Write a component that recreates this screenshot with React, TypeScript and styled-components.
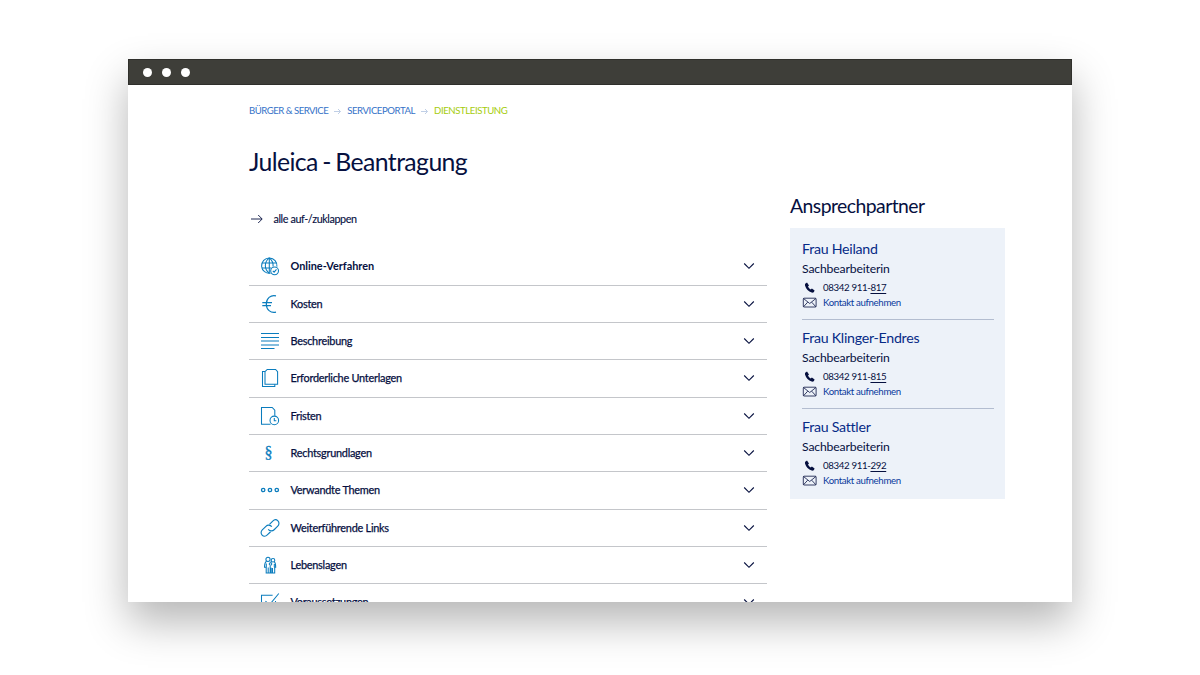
import React from "react";
import styled, { createGlobalStyle } from "styled-components";

const GlobalStyle = createGlobalStyle`
  * { box-sizing: border-box; }
  body { margin: 0; background: #fff; }
`;

const navy = "#06103f";
const iconBlue = "#0a7cbd";

const Stage = styled.div`
  height: 675px;
  padding: 59px 128.5px 0 128px;
  overflow: hidden;
  font-family: Lato, "Noto Sans", sans-serif;
  color: ${navy};
`;

const Browser = styled.div`
  height: 543px;
  background: #fff;
  box-shadow: 0 20px 40px rgba(0, 0, 0, 0.29);
  display: flex;
  flex-direction: column;
  overflow: hidden;
`;

const TitleBar = styled.div`
  flex: none;
  height: 26px;
  padding: 0 13.5px;
  display: flex;
  align-items: center;
  gap: 10px;
  background: #3e3e39;
  border: 1px solid #2f2f2b;
`;

const Dot = styled.span`
  width: 9px;
  height: 9px;
  border-radius: 50%;
  background: #fff;
`;

const Page = styled.div`
  flex: 1;
  min-height: 0;
  padding: 0 66px 0 121px;
  display: grid;
  grid-template-columns: 518px 215px;
  column-gap: 23px;
  overflow: hidden;
`;

const Main = styled.main`
  display: flex;
  flex-direction: column;
`;

const Breadcrumb = styled.nav`
  margin-top: 19px;
  height: 14px;
  display: flex;
  align-items: center;
  font-size: 9.6px;
  line-height: 14px;
  letter-spacing: -0.42px;
`;

const Crumb = styled.span<{ $current?: boolean }>`
  color: ${(p) => (p.$current ? "#a5cc0c" : "#3572c8")};
  white-space: nowrap;
  &:first-child {
    letter-spacing: -0.5px;
  }
`;

const CrumbArrow = styled.svg`
  flex: none;
  width: 7px;
  height: 7px;
  margin: 0 6px;
  stroke: #c0cfe6;
`;

const Title = styled.h1`
  margin: 28px 0 0;
  height: 32px;
  font-size: 24.8px;
  line-height: 32px;
  font-weight: 400;
  letter-spacing: -0.6px;
  word-spacing: -1.3px;
`;

const ToggleAll = styled.div`
  margin-top: 33px;
  height: 16px;
  padding-left: 2px;
  display: flex;
  align-items: center;
  gap: 10.5px;
  font-size: 10.8px;
  line-height: 16px;
  letter-spacing: -0.4px;
  -webkit-text-stroke: 0.12px ${navy};
`;

const List = styled.div`
  margin-top: 21.5px;
  flex: none;
`;

const Row = styled.div`
  height: 37.3px;
  padding: 0 12px 0.4px 11px;
  display: flex;
  align-items: center;
  border-bottom: 1px solid #c4c6ca;
  font-size: 10.9px;
  line-height: 16px;
`;

const RowIcon = styled.svg`
  flex: none;
  width: 20px;
  height: 20px;
  margin-right: 10.5px;
  fill: none;
  stroke: ${iconBlue};
  stroke-width: 1.05;
`;

const RowLabel = styled.span<{ $strong?: boolean }>`
  flex: 1;
  font-weight: ${(p) => (p.$strong ? 700 : 400)};
  letter-spacing: ${(p) => (p.$strong ? -0.02 : -0.25)}px;
  -webkit-text-stroke: ${(p) => (p.$strong ? 0 : 0.25)}px ${navy};
`;

const Chevron = styled.svg`
  flex: none;
  width: 12px;
  height: 8px;
  fill: none;
  stroke: ${navy};
  stroke-width: 1.1;
`;

const Side = styled.aside`
  padding-top: 106.5px;
`;

const SideTitle = styled.h2`
  margin: 0;
  height: 28px;
  font-size: 19.4px;
  line-height: 27px;
  font-weight: 400;
  letter-spacing: -0.55px;
`;

const Contacts = styled.div`
  margin-top: 8.5px;
  height: 271px;
  padding: 2px 11.5px 0 12px;
  background: #edf2f9;
`;

const Contact = styled.section`
  height: 89px;
  padding-top: 8px;
  border-top: 1px solid transparent;
  & + & {
    border-top-color: #b3bdd0;
  }
`;

const Name = styled.div`
  height: 20px;
  font-size: 14.2px;
  line-height: 20px;
  letter-spacing: -0.27px;
  color: #062a86;
`;

const Role = styled.div`
  height: 20.5px;
  font-size: 12.2px;
  line-height: 20px;
  letter-spacing: -0.15px;
`;

const Detail = styled.div<{ $link?: boolean }>`
  height: 15px;
  display: flex;
  align-items: center;
  gap: 6px;
  font-size: 9.7px;
  line-height: 15px;
  letter-spacing: ${(p) => (p.$link ? -0.37 : -0.36)}px;
  color: ${(p) => (p.$link ? "#0a3a9c" : navy)};
`;

const DetailIcon = styled.svg`
  flex: none;
  width: 15px;
  height: 13px;
`;

const Extension = styled.span`
  text-decoration: underline;
  text-underline-offset: 1.5px;
  text-decoration-thickness: 1px;
`;

const glyphs: Record<string, React.ReactNode> = {
  globe: (
    <>
      <path d="M10.6 17.2A7.7 7.7 0 1 1 16.9 10.6" />
      <path d="M9.3 1.8v15.5M2 7h14.2M1.8 12h9.5M9.3 1.8C4 5.8 4 13.4 9.3 17.3M9.3 1.8c3 2.4 4 5.5 3.8 8.7" />
      <circle cx="14.6" cy="14.8" r="3.9" />
      <path d="m12.8 14.9 1.3 1.3 2.4-2.8" />
    </>
  ),
  euro: <path strokeWidth="1.2" d="M16 1.8C10.5.5 6.3 4.5 6.3 10s4.2 9.5 9.7 8.200M2.3 8.6h9.7M2.3 11.6h8.7" />,
  lines: <path strokeWidth="1.2" d="M1 2.5h18M1 6.5h18M1 10h18M1 14h18M1 17.5h13.5" />,
  copy: (
    <>
      <path d="M7.2 1.5h8.4l2 2.2v12.6H5V3.7Z" />
      <path d="M5 3.5H2.5v15h12.3v-2.2" />
    </>
  ),
  deadline: (
    <>
      <path d="M10.5 18.3H1.5V1.5h10.7l2.600 2.700v5.500" />
      <circle cx="14.300" cy="14.400" r="4.300" />
      <path d="M14.300 12v2.700h2" />
    </>
  ),
  dots: (
    <g strokeWidth="1.3">
      <circle cx="3.200" cy="10" r="1.700" />
      <circle cx="10" cy="10" r="1.700" />
      <circle cx="16.800" cy="10" r="1.700" />
    </g>
  ),
  link: (
    <g transform="translate(-0.900 -0.900) scale(0.910)" strokeWidth="1.250">
      <path d="M10 13.400c1.900 2.200 4.700 2.300 6.500.5l4-4c1.700-1.700 1.700-4.200.2-5.700s-4-1.500-5.700.2l-3.600 3.500" />
      <path d="M14 10.600c-1.900-2.200-4.700-2.300-6.500-.5l-4 4c-1.700 1.700-1.700 4.200-.2 5.700s4 1.500 5.700-.2l3.600-3.500" />
    </g>
  ),
  family: (
    <>
      <circle cx="8" cy="4.300" r="2.100" />
      <circle cx="13" cy="5.200" r="1.800" />
      <circle cx="10.500" cy="9" r="1.300" />
      <path d="M6.600 6.200C5 7 4.500 8 4.500 12.300h1.700V18h2v-5.500M8.200 18h2v-7M10.200 7h1.600M14.300 6.700c1.100 1 1.400 3 1.400 5.600h-1V18h-2.200v-5M12.500 18h-1.300v-5.300M6.300 8.500v4M14.300 9v3.300" />
    </>
  ),
  check: <path d="M12.600 3.300H1.500v15h14V9M18.800 1.500 9.500 12.800 5.500 9.200" />,
};

const rows: { label: string; icon: string; strong?: boolean }[] = [
  { label: "Online-Verfahren", icon: "globe", strong: true },
  { label: "Kosten", icon: "euro" },
  { label: "Beschreibung", icon: "lines" },
  { label: "Erforderliche Unterlagen", icon: "copy" },
  { label: "Fristen", icon: "deadline" },
  { label: "Rechtsgrundlagen", icon: "section" },
  { label: "Verwandte Themen", icon: "dots" },
  { label: "Weiterführende Links", icon: "link" },
  { label: "Lebenslagen", icon: "family" },
  { label: "Voraussetzungen", icon: "check" },
];

const contacts = [
  { name: "Frau Heiland", ext: "817" },
  { name: "Frau Klinger-Endres", ext: "815" },
  { name: "Frau Sattler", ext: "292" },
];

const SectionSign = styled.span`
  flex: none;
  width: 20px;
  margin-right: 10.5px;
  padding-right: 3px;
  text-align: center;
  font-family: "Liberation Serif", serif;
  font-size: 16px;
  -webkit-text-stroke: 0.3px ${iconBlue};
  color: ${iconBlue};
`;

const Arrow = () => (
  <CrumbArrow viewBox="0 0 7 7" fill="none">
    <path d="M0 3.500h6.500M4 1l2.500 2.500L4 6" />
  </CrumbArrow>
);

export default function App() {
  return (
    <>
      <GlobalStyle />
      <Stage>
        <Browser>
          <TitleBar>
            <Dot />
            <Dot />
            <Dot />
          </TitleBar>
          <Page>
            <Main>
              <Breadcrumb>
                <Crumb>BÜRGER &amp; SERVICE</Crumb>
                <Arrow />
                <Crumb>SERVICEPORTAL</Crumb>
                <Arrow />
                <Crumb $current>DIENSTLEISTUNG</Crumb>
              </Breadcrumb>
              <Title>Juleica - Beantragung</Title>
              <ToggleAll>
                <svg width="12" height="10" viewBox="0 0 12 10" fill="none" stroke={navy} strokeWidth="0.9">
                  <path d="M0 5h11M7.200 1l4 4-4 4" />
                </svg>
                <span>alle auf-/zuklappen</span>
              </ToggleAll>
              <List>
                {rows.map((r) => (
                  <Row key={r.label}>
                    {r.icon === "section" ? (
                      <SectionSign>§</SectionSign>
                    ) : (
                      <RowIcon viewBox="0 0 20 20">{glyphs[r.icon]}</RowIcon>
                    )}
                    <RowLabel $strong={r.strong}>{r.label}</RowLabel>
                    <Chevron viewBox="0 0 12 8">
                      <path d="m1.200 1.500 4.800 4.800 4.800-4.800" />
                    </Chevron>
                  </Row>
                ))}
              </List>
            </Main>
            <Side>
              <SideTitle>Ansprechpartner</SideTitle>
              <Contacts>
                {contacts.map((c) => (
                  <Contact key={c.name}>
                    <Name>{c.name}</Name>
                    <Role>Sachbearbeiterin</Role>
                    <Detail>
                      <DetailIcon viewBox="0 0 15 13" fill={navy}>
                        <path d="M3.200 2.800 5 1.600l2 2.800-1 1c.5 1.300 1.400 2.300 2.700 3l1.200-.8 2.700 2-.7 1.400c-.5.7-1.300.9-2.200.6C6.500 10.600 4 8 3 4.500c-.1-.7 0-1.300.2-1.700Z" />
                      </DetailIcon>
                      <span>
                        08342 911-<Extension>{c.ext}</Extension>
                      </span>
                    </Detail>
                    <Detail $link>
                      <DetailIcon viewBox="0 0 15 13" fill="none" stroke={navy} strokeWidth="0.8">
                        <rect x="1.300" y="2.200" width="12.800" height="8.800" rx="0.800" />
                        <path d="m1.500 2.500 6.200 5 6.200-5M1.500 10.800l4.200-4.600M13.900 10.800 9.700 6.200" />
                      </DetailIcon>
                      <span>Kontakt aufnehmen</span>
                    </Detail>
                  </Contact>
                ))}
              </Contacts>
            </Side>
          </Page>
        </Browser>
      </Stage>
    </>
  );
}
